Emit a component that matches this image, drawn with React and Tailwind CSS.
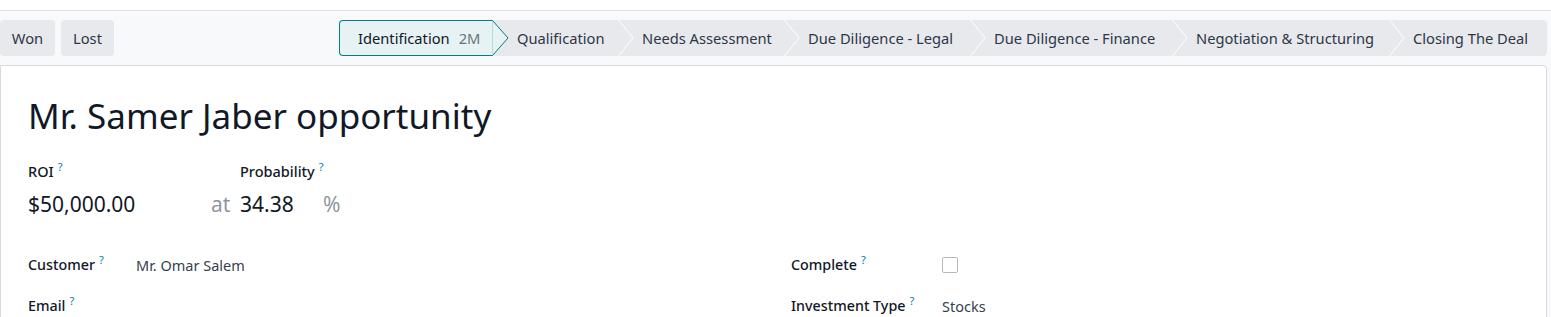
import React from 'react';

const stages = [
    { name: 'Qualification', w: 'w-[88px]' },
    { name: 'Needs Assessment', w: 'w-[129px]' },
    { name: 'Due Diligence - Legal', w: 'w-[149px]' },
    { name: 'Due Diligence - Finance', w: 'w-[165px]' },
    { name: 'Negotiation & Structuring', w: 'w-[180px]' },
    { name: 'Closing The Deal', w: 'w-[116px]' },
];

function Help() {
    return <sup className="ml-[4px] text-[11px] -top-[6px] text-[#0180a5] font-normal">?</sup>;
}

function Chevron() {
    return (
        <svg width="16" height="36" viewBox="0 0 16 36" className="shrink-0">
            <polyline points="0.5,0 15,18 0.5,36" fill="none" stroke="#ffffff" strokeWidth="1" />
        </svg>
    );
}

function StatusBar() {
    return (
        <div className="flex h-[36px] items-stretch">
            {/* active stage */}
            <div className="flex items-center w-[153px] pl-[18px] bg-[#e6f2f3] border border-r-0 border-[#017e84] rounded-l-[4px] text-[14.7px] text-[#111827] whitespace-nowrap">
                Identification
                <span className="ml-[9px] text-[#6b7280]">2M</span>
            </div>
            <svg width="17" height="36" viewBox="0 0 17 36" className="shrink-0">
                <rect x="0" y="0" width="17" height="36" fill="#e7e9ed" />
                <polygon points="0,0.5 0.5,0.5 16,18 0.5,35.5 0,35.5" fill="#e6f2f3" stroke="#017e84" strokeWidth="1" />
                <rect x="0" y="1" width="0.6" height="34" fill="#e6f2f3" />
            </svg>
            <div className="flex items-stretch bg-[#e7e9ed] rounded-r-[4px] pr-[5px]">
                {stages.map((s, i) => (
                    <div key={s.name} className="flex items-stretch">
                        <div className="flex items-center pl-[8px] pr-[13px] text-[14.7px] text-[#2d3748] whitespace-nowrap">
                            <span className={s.w}>{s.name}</span>
                        </div>
                        {i < stages.length - 1 && <Chevron />}
                    </div>
                ))}
            </div>
        </div>
    );
}

export default function App() {
    return (
        <div className="w-[1551px] h-[317px] overflow-hidden bg-white font-['Noto_Sans',sans-serif] text-[#111827]">
            <div className="h-[11px] border-b border-[#dee2e6]" />
            <div className="bg-[#f8f9fa] h-[306px]">
                {/* control panel */}
                <div className="flex items-center justify-between h-[54px] pr-[4px]">
                    <div className="flex gap-[6px]">
                        <button className="h-[36px] w-[55px] rounded-[4px] bg-[#e7e9ed] text-[14.7px] text-[#2d3748]">Won</button>
                        <button className="h-[36px] w-[53px] rounded-[4px] bg-[#e7e9ed] text-[14.7px] text-[#2d3748]">Lost</button>
                    </div>
                    <StatusBar />
                </div>

                {/* sheet */}
                <div className="mr-[4px] h-[260px] bg-white border border-[#d8dadd] rounded-tr-[4px] pl-[27px]">
                    <h1 className="mt-[28px] text-[35px] leading-[44px] text-[#111827]">Mr. Samer Jaber opportunity</h1>

                    <div className="flex mt-[23px]">
                        <div className="w-[183px]">
                            <div className="text-[14.5px] leading-[20px] font-medium">ROI<Help /></div>
                            <div className="mt-[9px] text-[21px] leading-[28px]">$50,000.00</div>
                        </div>
                        <div>
                            <div className="pl-[29px] text-[14.5px] leading-[20px] font-medium">Probability<Help /></div>
                            <div className="mt-[9px] flex text-[21px] leading-[28px]">
                                <span className="w-[29px] text-[#8f959e]">at</span>
                                <span className="w-[83px]">34.38</span>
                                <span className="text-[#8f959e]">%</span>
                            </div>
                        </div>
                    </div>

                    <div className="flex mt-[37px]">
                        <div className="w-[763px]">
                            <div className="flex h-[41px]">
                                <div className="w-[108px] text-[14.3px] leading-[20px] font-medium">Customer<Help /></div>
                                <div className="text-[14.5px] leading-[20px] text-[#374151]">Mr. Omar Salem</div>
                            </div>
                            <div className="flex h-[41px]">
                                <div className="w-[108px] text-[14.3px] leading-[20px] font-medium">Email<Help /></div>
                            </div>
                        </div>
                        <div>
                            <div className="flex h-[41px]">
                                <div className="w-[151px] text-[14.3px] leading-[20px] font-medium">Complete<Help /></div>
                                <div className="pt-[2px]">
                                    <div className="w-[16px] h-[16px] border border-[#b5b9bf] rounded-[2px] bg-white" />
                                </div>
                            </div>
                            <div className="flex h-[41px]">
                                <div className="w-[151px] text-[14.3px] leading-[20px] font-medium">Investment Type<Help /></div>
                                <div className="text-[14.5px] leading-[20px] text-[#374151]">Stocks</div>
                            </div>
                        </div>
                    </div>
                </div>
            </div>
        </div>
    );
}
